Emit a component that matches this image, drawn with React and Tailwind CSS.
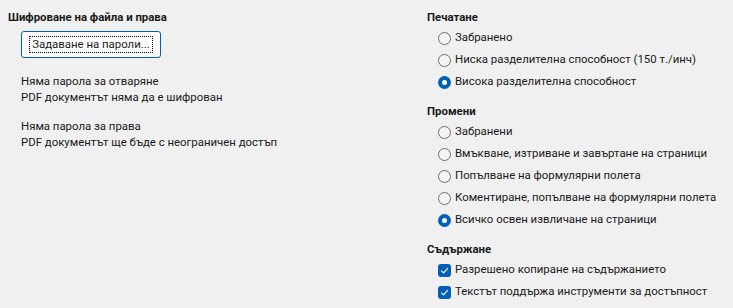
import React from 'react'

function Radio({ checked, label }) {
  return (
    <div className="flex items-center h-[22px] pl-[11px] whitespace-nowrap">
      {checked ? (
        <span className="w-[13px] h-[13px] rounded-full bg-[#005fb8] flex items-center justify-center shrink-0">
          <span className="w-[5px] h-[5px] rounded-full bg-white" />
        </span>
      ) : (
        <span className="w-[13px] h-[13px] rounded-full border border-[#6e6e6e] bg-[#f5f5f5] shrink-0" />
      )}
      <span className="ml-[4px]">{label}</span>
    </div>
  )
}

function Check({ label }) {
  return (
    <div className="flex items-center h-[22px] pl-[11px] whitespace-nowrap">
      <span className="w-[13px] h-[13px] rounded-[3px] bg-[#005fb8] flex items-center justify-center shrink-0">
        <svg width="9" height="9" viewBox="0 0 9 9" fill="none">
          <path d="M1.5 4.8 L3.6 6.8 L7.6 2.4" stroke="white" strokeWidth="1.1" strokeLinecap="round" strokeLinejoin="round" />
        </svg>
      </span>
      <span className="ml-[4px]">{label}</span>
    </div>
  )
}

function Section({ title, first, children }) {
  return (
    <div className={first ? '' : 'mt-[10px]'}>
      <div className="font-bold leading-[16px] h-4">{title}</div>
      <div className="mt-[2px]">{children}</div>
    </div>
  )
}

export default function App() {
  return (
    <div className="w-[733px] h-[308px] bg-[#f0f0f0] flex text-[11.4px] text-[#1a1a1a] font-['Roboto','Noto_Sans',sans-serif] overflow-hidden">
      {/* Encryption */}
      <div className="w-[427px] pl-2 pt-[9px] shrink-0">
        <div className="font-bold leading-[16px] h-4">Шифроване на файла и права</div>
        <button className="mt-[6px] ml-[13px] w-[140px] h-[27px] bg-white border border-[#005fb8] rounded-[3px] flex items-center justify-center">
          <span className="border border-dotted border-black px-[2px] leading-[15px]">Задаване на пароли...</span>
        </button>
        <div className="ml-[13px] mt-[15px] leading-[16px]">
          <div>Няма парола за отваряне</div>
          <div>PDF документът няма да е шифрован</div>
        </div>
        <div className="ml-[13px] mt-[13px] leading-[16px]">
          <div>Няма парола за права</div>
          <div>PDF документът ще бъде с неограничен достъп</div>
        </div>
      </div>

      {/* Permissions */}
      <div className="pt-[9px]">
        <Section title="Печатане" first>
          <Radio label="Забранено" />
          <Radio label="Ниска разделителна способност (150 т./инч)" />
          <Radio checked label="Висока разделителна способност" />
        </Section>
        <Section title="Промени">
          <Radio label="Забранени" />
          <Radio label="Вмъкване, изтриване и завъртане на страници" />
          <Radio label="Попълване на формулярни полета" />
          <Radio label="Коментиране, попълване на формулярни полета" />
          <Radio checked label="Всичко освен извличане на страници" />
        </Section>
        <Section title="Съдържане">
          <Check label="Разрешено копиране на съдържанието" />
          <Check label="Текстът поддържа инструменти за достъпност" />
        </Section>
      </div>
    </div>
  )
}
